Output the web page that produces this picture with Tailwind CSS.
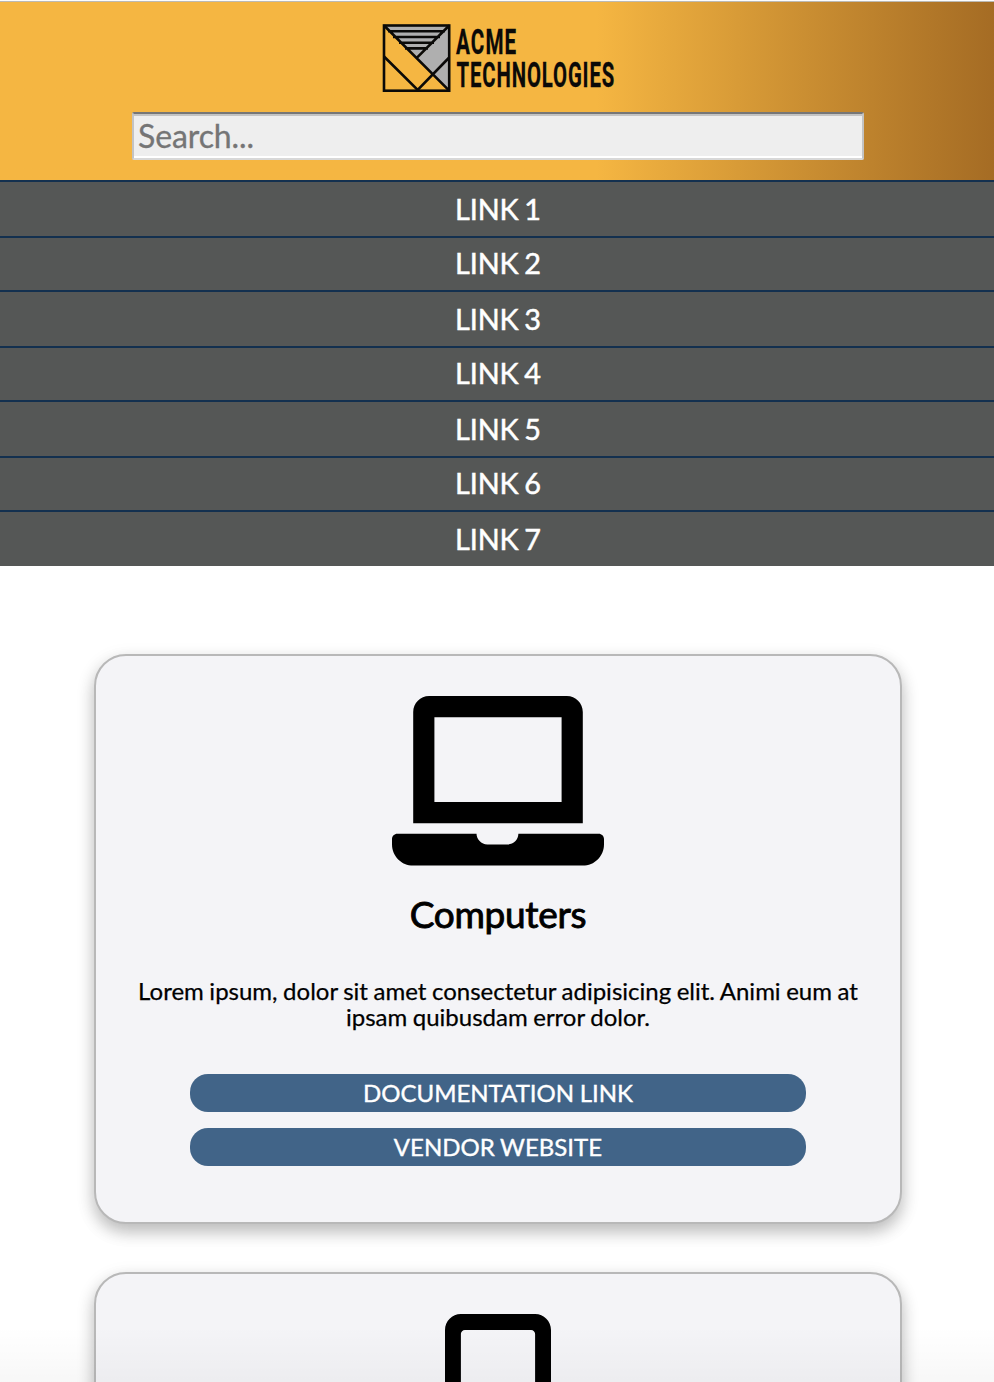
<!DOCTYPE html>
<html lang="en">
<head>
<meta charset="utf-8">
<title>Acme Technologies</title>
<script src="https://cdn.jsdelivr.net/npm/@tailwindcss/browser@4"></script>
</head>
<body class="bg-white font-['Lato',sans-serif] text-black">
<div class="relative h-[1382px] w-[994px] overflow-hidden">
  <header class="flex h-[180px] flex-col items-center border-t border-[#fdfdfd] bg-linear-to-r from-[#f5b642] from-60% to-[#a56c24]">
    <div class="h-px w-full shrink-0 bg-[#bcbab4]"></div>
    <svg class="mt-[20px] h-[74px] w-[248px] shrink-0 overflow-visible" viewBox="373 22 248 74" role="img" aria-label="Acme Technologies">
      <path d="M384 25.200H449L417.500 57Z M449 25.200V90.500L417.500 58.500Z" fill="#afafaf"/>
      <g stroke="#0b0a08" stroke-width="2.600" fill="none">
        <rect x="384" y="25.500" width="65.200" height="65.200"/>
        <path d="M384 25.500L449.200 90.700M449.200 25.500L416.500 58.200M384 56.500L417.700 90L449.200 57.500M388 31.200H445M393 37H440M399 42.700H434M405 48.400H428"/>
      </g>
      <g fill="#0b0a08" stroke="#0b0a08" stroke-width=".3" font-family="Roboto, sans-serif" font-weight="700" font-size="35">
        <text transform="translate(456 54) scale(.59 1)" textLength="102" lengthAdjust="spacing">ACME</text>
        <text transform="translate(456.500 86.500) scale(.58 1)" textLength="272" lengthAdjust="spacing">TECHNOLOGIES</text>
      </g>
    </svg>
    <div class="mt-[16px] ml-0.5 h-12 w-[732px] shrink-0 rounded-[2px] border-2 border-t-[#767676] border-r-[#c3c3c3] border-b-[#d8d8d8] border-l-[#c3c3c3]">
      <input class="block h-11 w-full border-t-2 border-b-2 border-t-[#c3c3c3] border-b-white bg-[#eeeeee] px-1 pb-0.5 text-[32px] leading-[38px] tracking-[-0.1px] placeholder:text-[#757575] [-webkit-text-stroke:0.3px_#757575]" placeholder="Search...">
    </div>
  </header>
  <nav class="bg-[#555756] text-center text-[28.800px] tracking-[-0.1px] text-white [-webkit-text-stroke:0.5px_white] [word-spacing:-1.500px]">
    <ul class="leading-[54px]">
      <li class="h-14 border-t-2 border-[#13304f] pl-0.5">LINK 1</li>
      <li class="h-[54px] border-t-2 border-[#13304f] pl-0.5 leading-[50px]">LINK 2</li>
      <li class="h-14 border-t-2 border-[#13304f] pl-0.5">LINK 3</li>
      <li class="h-[54px] border-t-2 border-[#13304f] pl-0.5 leading-[50px]">LINK 4</li>
      <li class="h-14 border-t-2 border-[#13304f] pl-0.5">LINK 5</li>
      <li class="h-[54px] border-t-2 border-[#13304f] pl-0.5 leading-[50px]">LINK 6</li>
      <li class="h-14 border-t-2 border-[#13304f] pl-0.5">LINK 7</li>
    </ul>
  </nav>
  <main class="ml-[94px] flex w-[808px] flex-col gap-[48px] pt-[88px]">
    <section class="flex h-[570px] flex-col items-center rounded-[32px] border-2 border-[#b8b8b8] bg-[#f4f4f7] pt-10 text-center shadow-[0_8px_16px_rgba(0,0,0,0.2),0_6px_20px_rgba(0,0,0,0.1)]">
      <svg class="h-[169.600px] w-[212px] shrink-0" viewBox="0 0 640 512"><path d="M624 416H381.540c-.74 19.810-14.710 32-32.740 32H288c-18.690 0-33.020-17.470-32.770-32H16c-8.800 0-16 7.200-16 16v16c0 35.200 28.800 64 64 64h512c35.200 0 64-28.800 64-64v-16c0-8.800-7.200-16-16-16zM576 48c0-26.400-21.600-48-48-48H112C85.600 0 64 21.600 64 48v336h512V48zm-64 272H128V64h384v256z"/></svg>
      <h2 class="mt-[26px] text-[37px] leading-[43px] tracking-[-0.3px] [-webkit-text-stroke:0.900px_black]">Computers</h2>
      <p class="mt-[43px] w-[728px] text-[24px] leading-[26px] [-webkit-text-stroke:0.250px_black] [word-spacing:-0.600px]">Lorem ipsum, dolor sit amet consectetur adipisicing elit. Animi eum at ipsam quibusdam error dolor.</p>
      <a class="mt-[44px] h-[38px] w-[616px] rounded-[18px] bg-[#416488] text-[24px] leading-[38px] text-white [-webkit-text-stroke:0.400px_white] [word-spacing:-0.500px]">DOCUMENTATION LINK</a>
      <a class="mt-4 h-[38px] w-[616px] rounded-[18px] bg-[#416488] text-[24px] leading-[38px] text-white [-webkit-text-stroke:0.400px_white] [word-spacing:-0.500px]">VENDOR WEBSITE</a>
    </section>
    <section class="flex h-[570px] flex-col items-center rounded-[32px] border-2 border-[#b8b8b8] bg-[#f4f4f7] pt-10 shadow-[0_8px_16px_rgba(0,0,0,0.2),0_6px_20px_rgba(0,0,0,0.1)]">
      <svg class="h-[169.600px] w-[106px] shrink-0" viewBox="0 0 320 512"><path d="M272 0H48C21.500 0 0 21.500 0 48v416c0 26.500 21.500 48 48 48h224c26.500 0 48-21.500 48-48V48c0-26.500-21.500-48-48-48zM160 480c-17.700 0-32-14.300-32-32s14.300-32 32-32 32 14.300 32 32-14.300 32-32 32zm112-108c0 6.600-5.400 12-12 12H60c-6.600 0-12-5.400-12-12V60c0-6.600 5.400-12 12-12h200c6.600 0 12 5.400 12 12v312z"/></svg>
    </section>
  </main>
  <div class="absolute bottom-0 left-0 h-[56px] w-full bg-linear-to-b from-black/0 to-black/[0.03]"></div>
</div>
</body>
</html>
